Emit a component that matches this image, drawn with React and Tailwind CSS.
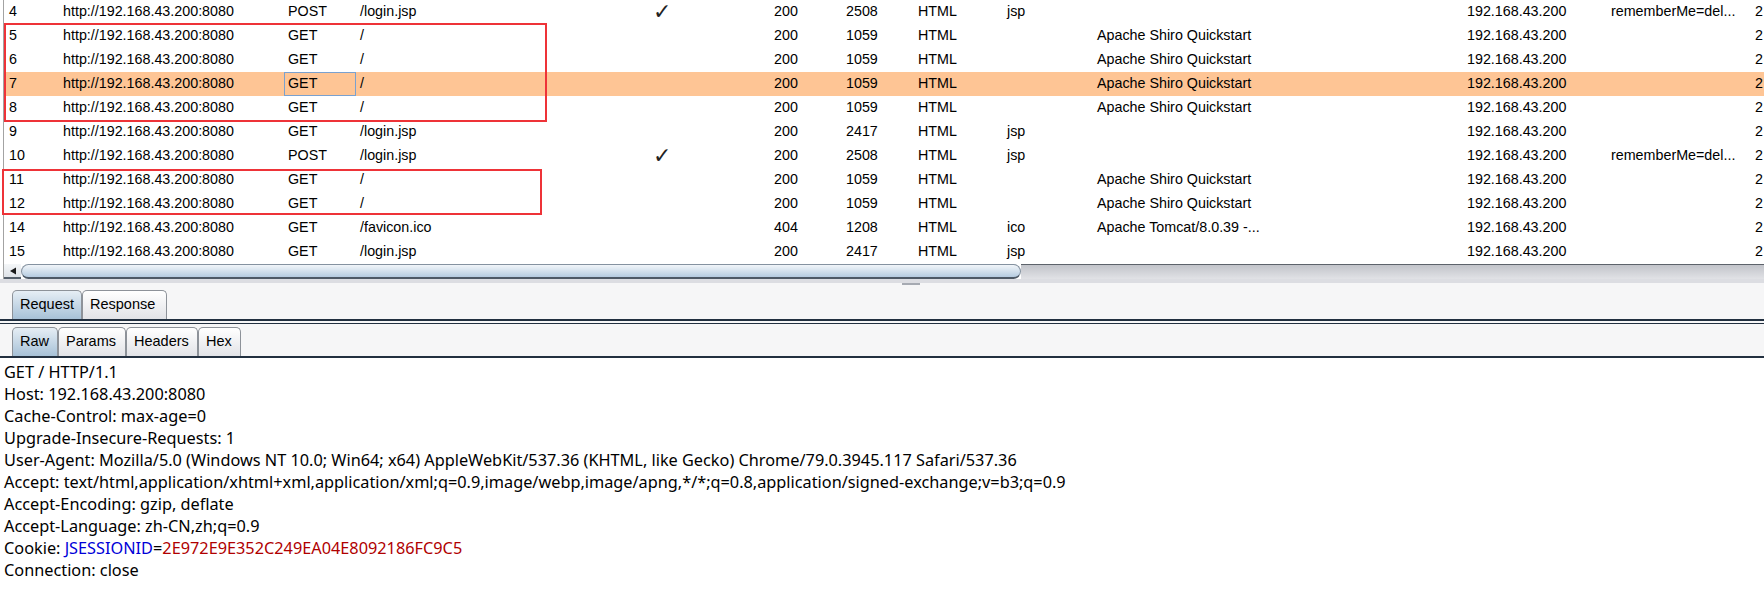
const rows = [
  { n: '4', m: 'POST', u: '/login.jsp', chk: true, s: '200', len: '2508', ext: 'jsp', title: '', c: 'rememberMe=del...' },
  { n: '5', m: 'GET', u: '/', s: '200', len: '1059', ext: '', title: 'Apache Shiro Quickstart' },
  { n: '6', m: 'GET', u: '/', s: '200', len: '1059', ext: '', title: 'Apache Shiro Quickstart' },
  { n: '7', m: 'GET', u: '/', s: '200', len: '1059', ext: '', title: 'Apache Shiro Quickstart', sel: true },
  { n: '8', m: 'GET', u: '/', s: '200', len: '1059', ext: '', title: 'Apache Shiro Quickstart' },
  { n: '9', m: 'GET', u: '/login.jsp', s: '200', len: '2417', ext: 'jsp', title: '' },
  { n: '10', m: 'POST', u: '/login.jsp', chk: true, s: '200', len: '2508', ext: 'jsp', title: '', c: 'rememberMe=del...' },
  { n: '11', m: 'GET', u: '/', s: '200', len: '1059', ext: '', title: 'Apache Shiro Quickstart' },
  { n: '12', m: 'GET', u: '/', s: '200', len: '1059', ext: '', title: 'Apache Shiro Quickstart' },
  { n: '14', m: 'GET', u: '/favicon.ico', s: '404', len: '1208', ext: 'ico', title: 'Apache Tomcat/8.0.39 -...' },
  { n: '15', m: 'GET', u: '/login.jsp', s: '200', len: '2417', ext: 'jsp', title: '' },
]

const headers = [
  'GET / HTTP/1.1',
  'Host: 192.168.43.200:8080',
  'Cache-Control: max-age=0',
  'Upgrade-Insecure-Requests: 1',
  'User-Agent: Mozilla/5.0 (Windows NT 10.0; Win64; x64) AppleWebKit/537.36 (KHTML, like Gecko) Chrome/79.0.3945.117 Safari/537.36',
  'Accept: text/html,application/xhtml+xml,application/xml;q=0.9,image/webp,image/apng,*/*;q=0.8,application/signed-exchange;v=b3;q=0.9',
  'Accept-Encoding: gzip, deflate',
  'Accept-Language: zh-CN,zh;q=0.9',
]

function Tab({ label, w, active }) {
  return (
    <div
      className={
        'h-[29px] border border-b-0 border-[#8d9299] rounded-t-[5px] pl-[7px] flex items-center text-[14.5px] text-black ' +
        (active ? 'bg-gradient-to-b from-[#e6eef5] to-[#a7c1d7]' : 'bg-gradient-to-b from-white to-[#e2e3e7]')
      }
      style={{ width: w }}
    >
      {label}
    </div>
  )
}

export default function App() {
  return (
    <div className="relative w-[1764px] h-[589px] overflow-hidden bg-[#f6f6f7] font-['Liberation_Sans',Arial,sans-serif] text-black">
      {/* request table */}
      <div className="bg-white pl-[3px]">
        <div className="border-l border-[#a3a3a3]">
          {rows.map(r => (
            <div
              key={r.n}
              className={'h-6 grid grid-cols-[55px_225px_72px_295px_119px_72px_72px_89px_90px_370px_144px_144px_1fr] items-center text-[14.3px] whitespace-nowrap ' + (r.sel ? 'bg-[#fec595]' : '')}
            >
              <div className="pl-[5px]">{r.n}</div>
              <div className="pl-1">http://192.168.43.200:8080</div>
              <div className={'h-6 flex items-center ' + (r.sel ? 'pl-[3px] border border-[#7aa1cf]' : 'pl-1')}>{r.m}</div>
              <div className="pl-1">{r.u}</div>
              <div className="pl-[2px] font-['DejaVu_Sans',sans-serif] text-[22px] leading-6 text-[#222]">{r.chk ? '✓' : ''}</div>
              <div className="pl-1">{r.s}</div>
              <div className="pl-1">{r.len}</div>
              <div className="pl-1">HTML</div>
              <div className="pl-1">{r.ext}</div>
              <div className="pl-1">{r.title}</div>
              <div className="pl-1">192.168.43.200</div>
              <div className="pl-1">{r.c || ''}</div>
              <div className="pl-1">2</div>
            </div>
          ))}
          {/* horizontal scrollbar */}
          <div className="h-[15px] flex">
            <div className="w-[17px] flex items-center justify-center bg-gradient-to-b from-[#f4f6f8] to-[#dfe3e8] border-b-2 border-[#56606b]">
              <svg width="8" height="8" viewBox="0 0 8 8"><path d="M1 4 L7 0.5 L7 7.5 Z" fill="#1a1a1a" /></svg>
            </div>
            <div className="w-[1000px] rounded-[8px] border border-[#8592a0] border-b-2 border-b-[#4e5966] bg-gradient-to-b from-[#f1f5f9] via-[#d4e1ed] to-[#b5cbe0]" />
            <div className="flex-1 border-t border-[#5d636b] bg-gradient-to-b from-[#c2c4ca] to-[#e1e2e6]" />
          </div>
        </div>
      </div>

      {/* splitter */}
      <div className="h-[4px] bg-[#dcdde2]" />
      <div className="h-[7px] flex justify-center">
        <div className="ml-[58px] w-[18px] h-[2px] bg-[#a6aab2]" />
      </div>

      {/* Request / Response tabs */}
      <div className="flex pl-3">
        <Tab label="Request" w={70} active />
        <Tab label="Response" w={85} />
      </div>
      <div className="h-[2px] bg-[#223040]" />
      <div className="h-[2px]" />
      <div className="h-px bg-[#223040]" />
      <div className="h-[3px]" />

      {/* Raw / Params / Headers / Hex */}
      <div className="flex pl-3">
        <Tab label="Raw" w={46} active />
        <Tab label="Params" w={68} />
        <Tab label="Headers" w={72} />
        <Tab label="Hex" w={43} />
      </div>
      <div className="h-[2px] bg-[#223040]" />

      {/* raw request */}
      <div className="bg-white h-[300px] pt-[3px] pl-1 font-['Noto_Sans',sans-serif] text-[16.3px] leading-[22px] text-black">
        {headers.map(h => (
          <div key={h} className="whitespace-nowrap">{h}</div>
        ))}
        <div className="whitespace-nowrap">
          Cookie: <span className="text-[#0000d8]">JSESSIONID</span>=<span className="text-[#b00000]">2E972E9E352C249EA04E8092186FC9C5</span>
        </div>
        <div className="whitespace-nowrap">Connection: close</div>
      </div>

      {/* annotation boxes */}
      <div className="absolute left-[4px] top-[23px] w-[543px] h-[99px] border-2 border-[#ee3338]" />
      <div className="absolute left-[2px] top-[169px] w-[540px] h-[46px] border-2 border-[#ee3338]" />
    </div>
  )
}
